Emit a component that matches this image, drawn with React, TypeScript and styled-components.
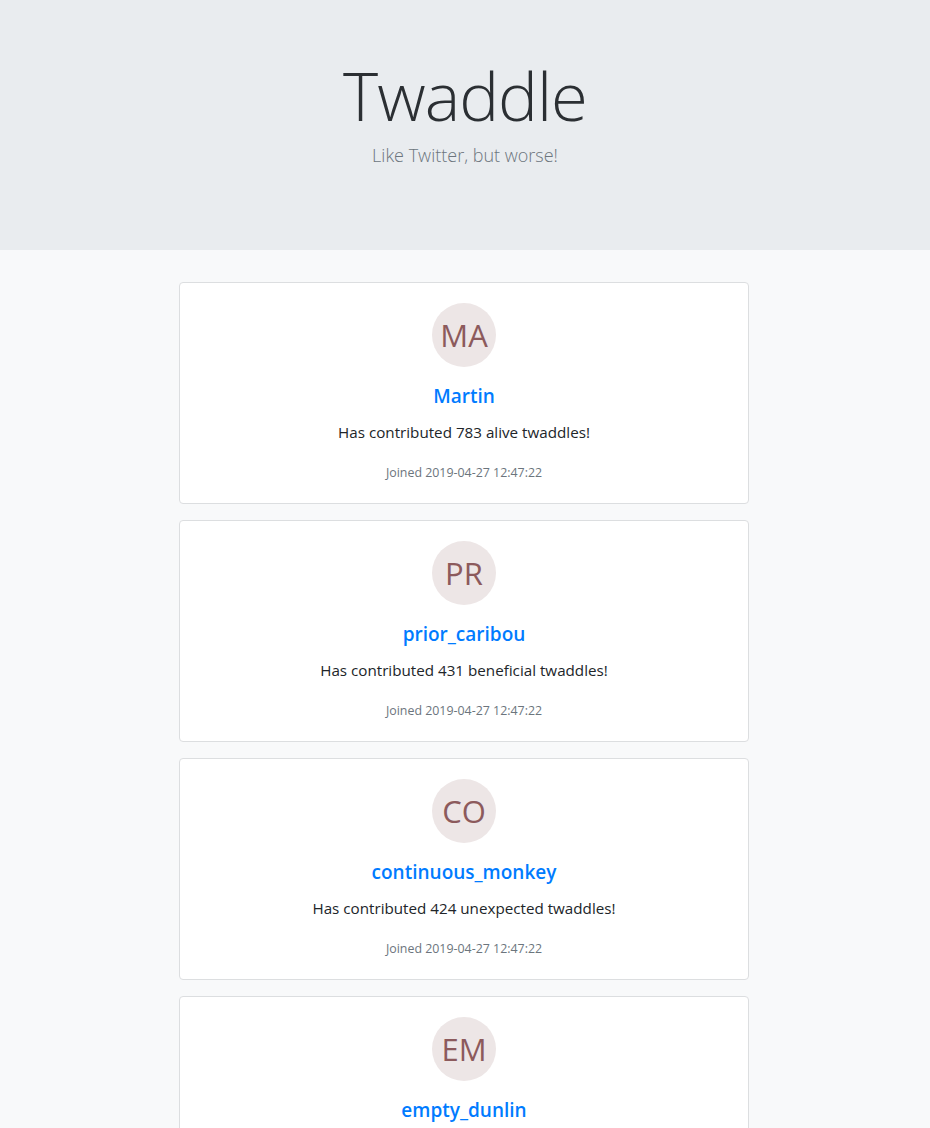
import React from "react";
import styled, { createGlobalStyle } from "styled-components";

const Global = createGlobalStyle`
  html, body { margin: 0; padding: 0; }
  body {
    background: #f8f9fa;
    font-family: "Open Sans", "Noto Sans", "Liberation Sans", sans-serif;
    color: #212529;
  }
`;

const Hero = styled.header`
  background: #e9ecef;
  height: 250px;
  box-sizing: border-box;
  padding-top: 50px;
  text-align: center;
`;

const Title = styled.h1`
  margin: 0;
  font-size: 67px;
  font-weight: 300;
  line-height: 90px;
  color: #2b2f33;
  letter-spacing: -1px;
`;

const Lead = styled.p`
  margin: 0;
  font-size: 18px;
  font-weight: 300;
  line-height: 30px;
  color: #6c757d;
`;

const List = styled.main`
  width: 570px;
  margin: 32px auto 0;
  display: flex;
  flex-direction: column;
  gap: 16px;
  transform: translateX(-1px);
`;

const Card = styled.article`
  background: #fff;
  border: 1px solid #dcdee0;
  border-radius: 4px;
  height: 222px;
  box-sizing: border-box;
  padding: 20px 20px 0;
  display: flex;
  flex-direction: column;
  align-items: center;
  text-align: center;
`;

const Avatar = styled.div`
  width: 64px;
  height: 64px;
  border-radius: 50%;
  background: #ede6e6;
  color: #8c5a5c;
  font-size: 31px;
  line-height: 64px;
  font-weight: 400;
`;

const Name = styled.a`
  margin-top: 17px;
  font-size: 19px;
  font-weight: 600;
  line-height: 24px;
  color: #007bff;
  text-decoration: none;
`;

const Text = styled.p`
  margin: 12px 0 0;
  font-size: 15.2px;
  line-height: 24px;
  color: #212529;
`;

const Joined = styled.small`
  margin-top: 19px;
  font-size: 12.4px;
  line-height: 19px;
  color: #6c757d;
`;

const users = [
  { init: "MA", name: "Martin", count: 783, adj: "alive" },
  { init: "PR", name: "prior_caribou", count: 431, adj: "beneficial" },
  { init: "CO", name: "continuous_monkey", count: 424, adj: "unexpected" },
  { init: "EM", name: "empty_dunlin", count: 410, adj: "helpful" },
];

export default function App() {
  return (
    <>
      <Global />
      <Hero>
        <Title>Twaddle</Title>
        <Lead>Like Twitter, but worse!</Lead>
      </Hero>
      <List>
        {users.map((u) => (
          <Card key={u.name}>
            <Avatar>{u.init}</Avatar>
            <Name href="#">{u.name}</Name>
            <Text>
              Has contributed {u.count} {u.adj} twaddles!
            </Text>
            <Joined>Joined 2019-04-27 12:47:22</Joined>
          </Card>
        ))}
      </List>
    </>
  );
}
